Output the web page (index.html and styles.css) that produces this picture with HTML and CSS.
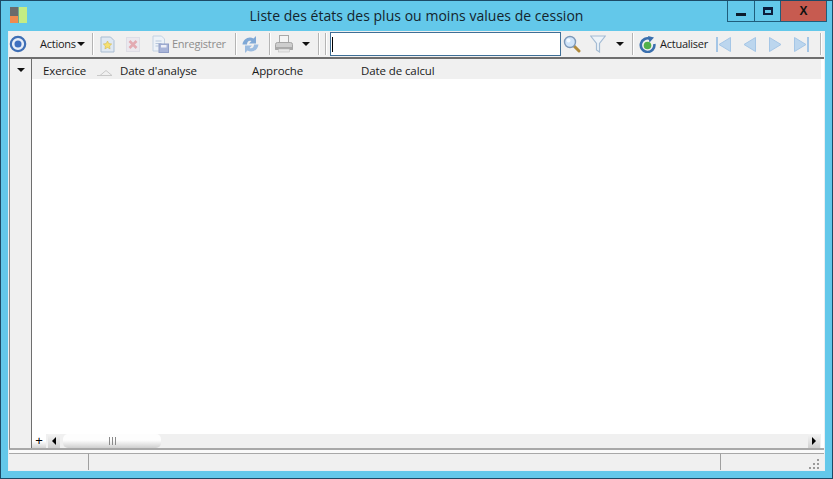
FILE: index.html
```html
<!DOCTYPE html>
<html lang="fr">
<head>
<meta charset="utf-8">
<title>Liste des états des plus ou moins values de cession</title>
<link rel="stylesheet" href="styles.css">
</head>
<body>
<div class="window">
  <header class="titlebar">
    <svg class="app-icon" width="17" height="16" viewBox="0 0 17 16"><rect x="0" y="0" width="8" height="9" fill="#6b6b6b"/><rect x="0" y="9" width="8" height="7" fill="#f08a4e"/><rect x="9" y="0" width="8" height="16" fill="#c4ec84"/><rect x="8" y="0" width="1" height="16" fill="#6fa88f"/></svg>
    <h1 class="title">Liste des états des plus ou moins values de cession</h1>
    <div class="controls">
      <div class="ctl ctl-min"><span class="min-glyph"></span></div>
      <div class="ctl ctl-max"><span class="max-glyph"></span></div>
      <div class="ctl ctl-close">X</div>
    </div>
  </header>
  <main class="client">
    <nav class="toolbar">
      <svg class="i i-target" width="18" height="18" viewBox="0 0 18 18"><circle cx="9" cy="9" r="7.200" fill="#e6edf8" stroke="#3f6fb5" stroke-width="2.200"/><circle cx="9" cy="9" r="3.500" fill="#3d6fc0"/></svg>
      <span class="lbl lbl-actions">Actions</span>
      <span class="caret c-actions"></span>
      <span class="sep s1"></span>
      <svg class="i i-new" width="15" height="17" viewBox="0 0 15 17"><path d="M1 1h9.500L14 4.500V16H1z" fill="#dfe8f2" stroke="#a9bdd2"/><path d="M7.500 5l1.300 2.600 2.900.4-2.100 2 .5 2.900-2.600-1.400-2.600 1.400.5-2.900-2.100-2 2.900-.4z" fill="#f5e070" stroke="#d0b040" stroke-width=".5"/></svg>
      <svg class="i i-del" width="14" height="15" viewBox="0 0 14 15"><rect x=".5" y=".5" width="13" height="14" fill="#ebe8ee" stroke="#dedee6"/><path d="M3.500 4l7 7M10.500 4l-7 7" stroke="#e3aab2" stroke-width="2.600"/></svg>
      <svg class="i i-save" width="17" height="18" viewBox="0 0 17 18"><path d="M1 1h8.500l3 3v12H1z" fill="#edf2f8" stroke="#c4d2e2"/><path d="M3.500 6h6M3.500 8.500h6M3.500 11h3" stroke="#b8c8dc"/><rect x="7" y="9" width="9.500" height="8.500" fill="#a8b4d8" stroke="#8f9dc6"/><rect x="9" y="10" width="5.500" height="2.500" fill="#eef0f8"/></svg>
      <span class="lbl lbl-save">Enregistrer</span>
      <span class="sep s2"></span>
      <svg class="i i-sync" width="17" height="19" viewBox="0 0 17 19"><path d="M.5 9.500C1 4 7 .5 11.500 3.500L14 1v7.500H7l2.500-2.500C7 5 5 6.500 5 9.500z" fill="#7fa8d6"/><path d="M16.500 9.500C16 15 10 18.500 5.500 15.500L3 18v-7.500h7L7.500 13c2.500 1 4.500-.5 4.500-3.500z" fill="#9cbce0"/></svg>
      <span class="sep s3"></span>
      <svg class="i i-print" width="18" height="18" viewBox="0 0 18 18"><rect x="4.500" y=".5" width="9" height="8" fill="#f4f4f4" stroke="#a8a8a8"/><path d="M.5 9.500q0-2 2-2h13q2 0 2 2v5H.5z" fill="#cdcdcd" stroke="#a5a5a5"/><rect x=".5" y="12" width="17" height="3" fill="#a9a9a9"/><rect x="3.500" y="14" width="11" height="3" fill="#e8e8e8" stroke="#b5b5b5" stroke-width=".5"/></svg>
      <span class="caret c-print"></span>
      <span class="sep s4"></span>
      <span class="sep s5"></span>
      <div class="search"><span class="cursor"></span></div>
      <svg class="i i-search" width="18" height="18" viewBox="0 0 18 18"><path d="M10.500 10.500l5.500 5.500" stroke="#b18a3c" stroke-width="3" stroke-linecap="round"/><circle cx="7" cy="7" r="5.500" fill="#cfe4fa" stroke="#7d98b8" stroke-width="1.400"/><circle cx="5.500" cy="5.500" r="2" fill="#f3f9ff"/></svg>
      <svg class="i i-funnel" width="16" height="18" viewBox="0 0 16 18"><path d="M.7 1h14.600L9.500 8.500V17L6.500 15V8.500z" fill="#edf3f9" stroke="#a5bcd4" stroke-width="1.200"/></svg>
      <span class="caret c-filter"></span>
      <span class="sep s6"></span>
      <svg class="i i-refresh" width="17" height="17" viewBox="0 0 17 17"><path d="M11.500 3A6.800 6.800 0 1 0 15.300 8" fill="none" stroke="#3a6fae" stroke-width="2.600"/><path d="M9 0l6 1.500L10.500 6.500z" fill="#3a6fae"/><circle cx="8.500" cy="9.500" r="3.800" fill="#52b04a"/></svg>
      <span class="lbl lbl-refresh">Actualiser</span>
      <svg class="i i-first" width="15" height="15" viewBox="0 0 15 15"><rect x="0" y="0" width="2" height="15" fill="#a5c6e6"/><path d="M14.500 .5v14L3 7.500z" fill="#bcd6ee" stroke="#a5c6e6"/></svg>
      <svg class="i i-prev" width="13" height="15" viewBox="0 0 13 15"><path d="M12.500 .5v14L1 7.500z" fill="#bcd6ee" stroke="#a5c6e6"/></svg>
      <svg class="i i-next" width="13" height="15" viewBox="0 0 13 15"><path d="M.5 .5v14L12 7.500z" fill="#bcd6ee" stroke="#a5c6e6"/></svg>
      <svg class="i i-last" width="15" height="15" viewBox="0 0 15 15"><path d="M.5 .5v14L12 7.500z" fill="#bcd6ee" stroke="#a5c6e6"/><rect x="13" y="0" width="2" height="15" fill="#a5c6e6"/></svg>
      <span class="sep s7"></span>
    </nav>
    <section class="grid">
      <aside class="rowhead">
        <span class="caret c-rowhead"></span>
      </aside>
      <div class="table">
        <div class="thead">
          <span class="th th-ex">Exercice</span>
          <svg class="sort" width="15" height="6" viewBox="0 0 15 6"><path d="M0 5.500h15L9 .5 3 5.500" fill="none" stroke="#c8c8c8"/></svg>
          <span class="th th-date">Date d'analyse</span>
          <span class="th th-app">Approche</span>
          <span class="th th-calc">Date de calcul</span>
        </div>
        <div class="tbody"></div>
        <div class="hscroll">
          <span class="plus">+</span>
          <span class="sb-btn sb-left"></span>
          <span class="thumb"><span class="grip"></span></span>
          <span class="sb-btn sb-right"></span>
        </div>
      </div>
    </section>
    <footer class="status">
      <span class="cell cell-a"></span>
      <span class="cell cell-b"></span>
      <span class="cell cell-c">
        <svg class="resize" width="12" height="12" viewBox="0 0 12 12"><g fill="#9a9a9a"><rect x="9" y="1" width="2" height="2"/><rect x="5" y="5" width="2" height="2"/><rect x="9" y="5" width="2" height="2"/><rect x="1" y="9" width="2" height="2"/><rect x="5" y="9" width="2" height="2"/><rect x="9" y="9" width="2" height="2"/></g></svg>
      </span>
    </footer>
  </main>
</div>
</body>
</html>
```
FILE: styles.css
```css
* { box-sizing: border-box; }
html, body { margin: 0; padding: 0; }
body { width: 833px; height: 479px; overflow: hidden; font-family: "Open Sans", "Noto Sans", sans-serif; }
.window { width: 833px; height: 479px; display: flex; flex-direction: column; background: #63c8ea; border: 1px solid #1d4a66; padding: 0 7px 7px; }
.titlebar { height: 30px; flex: none; display: flex; align-items: flex-start; position: relative; }
.app-icon { margin: 6px 0 0 2px; }
.title { position: absolute; left: 0; right: 0; top: 5px; margin: 0; text-align: center; font-weight: 400; font-size: 14px; line-height: 20px; color: #14242c; letter-spacing: .03px; }
.controls { margin-left: auto; margin-right: -2px; display: flex; height: 21px; border: 1px solid #1f5d7c; border-top: 0; position: relative; }
.ctl { height: 20px; display: flex; align-items: center; justify-content: center; }
.ctl-min { width: 27px; border-right: 1px solid #1f5d7c; }
.ctl-max { width: 26px; border-right: 1px solid #1f5d7c; }
.ctl-close { width: 45px; background: #c75b50; color: #111; font: 700 12px "Liberation Sans", sans-serif; }
.min-glyph { width: 10px; height: 3px; background: #0c1c2c; margin-top: 6px; }
.max-glyph { width: 10px; height: 8px; border: 2px solid #0c1c3c; border-top-width: 3px; }
.client { flex: 1; display: flex; flex-direction: column; background: #fff; border: 1px solid #e9eef2; border-top: 0; min-height: 0; }
.toolbar { height: 28px; flex: none; display: flex; align-items: center; background: #f0f0f0; position: relative; border-bottom: 2px solid #6e6e6e; font-size: 11px; color: #1a1a1a; }
.i { flex: none; display: block; }
.lbl { flex: none; white-space: nowrap; line-height: 14px; letter-spacing: -.25px; }
.sep { flex: none; width: 1px; height: 22px; background: #b4b4b4; box-shadow: 1px 0 0 #fff; }
.caret { flex: none; width: 0; height: 0; border: 4px solid transparent; border-top-color: #111; border-bottom: 0; }
.lbl-actions { margin-left: 13px; width: 36px; }
.c-actions { margin-left: 1px; }
.s1 { margin-left: 7px; }
.i-new { margin-left: 7px; }
.i-del { margin-left: 11px; }
.i-save { margin-left: 12px; }
.lbl-save { margin-left: 3px; width: 55px; color: #8d8d8d; }
.s2 { margin-left: 8px; }
.i-sync { margin-left: 6px; }
.s3 { margin-left: 10px; }
.i-print { margin-left: 5px; }
.c-print { margin-left: 9px; }
.s4 { margin-left: 8px; }
.s5 { margin-left: 6px; }
.search { width: 231px; height: 24px; margin-left: 4px; background: #fff; border: 1px solid #3f6f96; display: flex; align-items: center; padding-left: 1px; }
.cursor { width: 1px; height: 15px; background: #000; }
.i-search { margin-left: 2px; }
.i-funnel { margin-left: 9px; }
.c-filter { margin-left: 10px; }
.s6 { margin-left: 8px; }
.i-refresh { margin-left: 6px; }
.lbl-refresh { margin-left: 4px; width: 47px; color: #1a1a1a; }
.i-first { margin-left: 9px; }
.i-prev { margin-left: 12px; }
.i-next { margin-left: 13px; }
.i-last { margin-left: 12px; }
.s7 { margin-left: 11px; }
.grid { flex: 1; display: flex; min-height: 0; background: #fff; border-left: 1px solid #8a8a8a; border-bottom: 2px solid #a8a8a8; }
.rowhead { width: 22px; flex: none; background: #f0f0f0; border-right: 1px solid #6e6e6e; padding: 9px 0 0 7px; }
.c-rowhead { display: block; }
.table { flex: 1; display: flex; flex-direction: column; min-width: 0; padding-right: 3px; }
.thead { height: 20px; flex: none; display: flex; align-items: center; padding-top: 3px; background: #f0f0f0; font-size: 11.5px; color: #1a1a1a; }
.th { flex: none; white-space: nowrap; line-height: 14px; letter-spacing: -.1px; }
.th-ex { margin-left: 11px; width: 43px; }
.sort { margin-left: 11px; margin-top: 5px; }
.th-date { margin-left: 8px; width: 77px; }
.th-app { margin-left: 55px; width: 53px; }
.th-calc { margin-left: 56px; }
.tbody { flex: 1; }
.hscroll { height: 14px; flex: none; display: flex; align-items: stretch; background: #f0f0f0; }
.plus { width: 14px; flex: none; font: 400 13px/13px "Liberation Sans", sans-serif; text-align: center; color: #000; background: linear-gradient(#fff 50%, #d4d4d4); }
.sb-btn { flex: none; width: 12px; display: flex; align-items: center; justify-content: center; background: linear-gradient(#f4f4f4, #d0d0d0); }
.sb-left { margin-left: 2px; }
.sb-left::before { content: ""; border: 4px solid transparent; border-right-color: #000; border-left: 0; }
.sb-right { margin-left: auto; margin-right: 1px; }
.sb-right::before { content: ""; border: 4px solid transparent; border-left-color: #000; border-right: 0; }
.thumb { width: 98px; margin: 0 0 0 3px; border-radius: 5px; background: linear-gradient(#fdfdfd 45%, #cfcfcf); display: flex; align-items: center; justify-content: center; }
.grip { width: 7px; height: 8px; border-left: 1px solid #8a8a8a; border-right: 1px solid #8a8a8a; background: linear-gradient(90deg, transparent 2px, #8a8a8a 2px, #8a8a8a 3px, transparent 3px); }
.status { height: 20px; flex: none; display: flex; background: #fafafa; padding: 3px 0 0; }
.cell { display: block; background: #f0f0f0; border-top: 1px solid #a8a8a8; height: 17px; }
.cell-a { width: 80px; border-right: 1px solid #a0a0a0; }
.cell-b { width: 632px; border-right: 1px solid #a0a0a0; }
.cell-c { flex: 1; display: flex; justify-content: flex-end; align-items: flex-end; padding-right: 4px; }
```
